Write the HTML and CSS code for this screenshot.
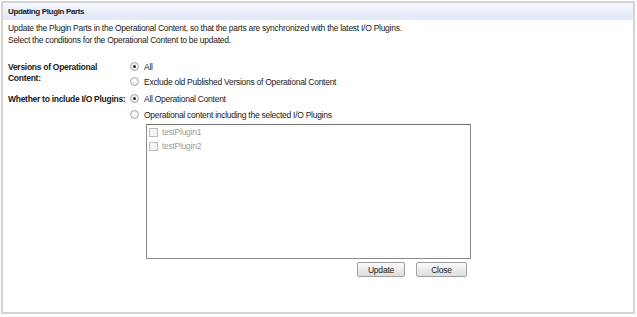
FILE: index.html
```html
<!DOCTYPE html>
<html>
<head>
<meta charset="utf-8">
<link rel="stylesheet" href="styles.css">
</head>
<body>
<div class="dialog">
  <div class="header">Updating Plugin Parts</div>
  <div class="content">
    <p class="intro">Update the Plugin Parts in the Operational Content, so that the parts are synchronized with the latest I/O Plugins.<br>Select the conditions for the Operational Content to be updated.</p>
    <div class="form">
      <div class="label">Versions of Operational Content:</div>
      <div class="options tight">
        <div class="opt"><span class="radio checked"></span>All</div>
        <div class="opt"><span class="radio"></span>Exclude old Published Versions of Operational Content</div>
      </div>
      <div class="label">Whether to include I/O Plugins:</div>
      <div class="options">
        <div class="opt"><span class="radio checked"></span>All Operational Content</div>
        <div class="opt"><span class="radio"></span>Operational content including the selected I/O Plugins</div>
        <div class="listbox">
          <div class="item"><span class="check"></span>testPlugin1</div>
          <div class="item"><span class="check"></span>testPlugin2</div>
        </div>
        <div class="buttons">
          <button class="btn">Update</button>
          <button class="btn close">Close</button>
        </div>
      </div>
    </div>
  </div>
</div>
</body>
</html>
```
FILE: styles.css
```css
* { box-sizing: border-box; }
body {
  margin: 0;
  background: #fff;
  font-family: "Liberation Sans", Arial, sans-serif;
  font-size: 8.5px;
  letter-spacing: -0.27px;
  color: #1a1a1a;
}
.dialog {
  margin: 1px 2px 0 1px;
  height: 313px;
  border: 2px solid #d4d4d4;
  background: #fff;
}
.header {
  height: 17px;
  padding: 4px 0 0 5px;
  font-size: 8px;
  font-weight: bold;
  letter-spacing: -0.35px;
  background: linear-gradient(#f6f8fc, #e0e7f6);
  border-bottom: 1px solid #e8ebf2;
}
.content {
  padding: 2px 0 0 5px;
}
.intro {
  margin: 0;
  line-height: 12px;
}
.form {
  margin-top: 15px;
  display: grid;
  grid-template-columns: 122px 1fr;
  row-gap: 6px;
}
.label {
  font-weight: bold;
  line-height: 11px;
  letter-spacing: -0.28px;
  padding-top: 1px;
  padding-right: 2px;
}
.options {
  display: flex;
  flex-direction: column;
  gap: 5px;
}
.options.tight { gap: 4px; }
.opt {
  display: flex;
  align-items: center;
  height: 11px;
}
.radio {
  width: 9px;
  height: 9px;
  border-radius: 50%;
  border: 1px solid #a8a8a8;
  background: radial-gradient(circle at 50% 40%, #fff, #e6e6e6);
  margin-right: 5px;
  position: relative;
}
.radio.checked::after {
  content: "";
  position: absolute;
  left: 2px;
  top: 2px;
  width: 3px;
  height: 3px;
  border-radius: 50%;
  background: #222;
}
.listbox {
  margin-top: -1px;
  margin-left: 16px;
  width: 325px;
  height: 135px;
  border: 1px solid #8a8a8a;
  border-top-color: #6e6e6e;
  padding: 0 0 0 2px;
  color: #a0a0a0;
}
.item {
  display: flex;
  align-items: center;
  height: 14px;
}
.check {
  width: 9px;
  height: 9px;
  border: 1px solid #bcbcbc;
  background: #f4f4f4;
  margin-right: 4px;
}
.buttons {
  display: flex;
  gap: 11px;
  margin-left: 227px;
  margin-top: -2px;
}
.btn {
  font-family: inherit;
  font-size: 8.5px;
  letter-spacing: -0.2px;
  color: #1a1a1a;
  width: 48px;
  height: 15px;
  padding: 0;
  border: 1px solid #a0a0a0;
  border-radius: 2px;
  background: linear-gradient(#fafafa, #dedede);
}
.btn.close { width: 51px; }
```
